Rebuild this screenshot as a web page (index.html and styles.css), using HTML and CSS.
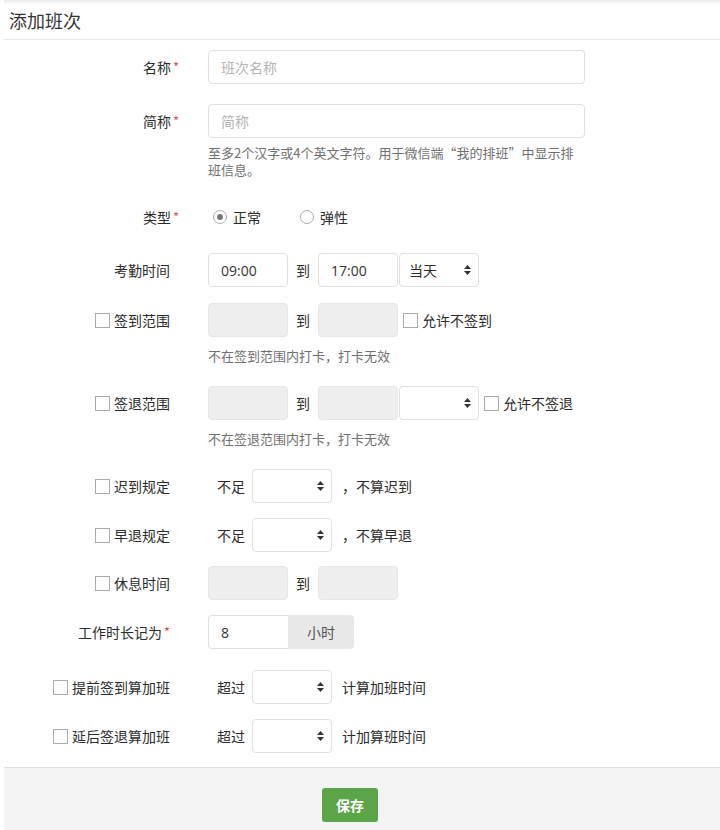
FILE: index.html
```html
<!DOCTYPE html>
<html lang="zh-CN">
<head>
<meta charset="utf-8">
<title>添加班次</title>
<link rel="stylesheet" href="styles.css">
</head>
<body>
<div class="page">
  <header class="head"><h1 class="title">添加班次</h1></header>
  <form class="form">
    <div class="group first">
      <div class="label">名称<span class="req hang">*</span></div>
      <div class="field"><div class="line"><input class="input wide" type="text" placeholder="班次名称"></div></div>
    </div>

    <div class="group mt20">
      <div class="label">简称<span class="req hang">*</span></div>
      <div class="field">
        <div class="line"><input class="input wide" type="text" placeholder="简称"></div>
        <p class="help near">至多2个汉字或4个英文字符。用于微信端“我的排班”中显示排班信息。</p>
      </div>
    </div>

    <div class="group mt22">
      <div class="label">类型<span class="req hang">*</span></div>
      <div class="field">
        <div class="line">
          <span class="radio checked"></span><span class="opt">正常</span>
          <span class="radio second"></span><span class="opt">弹性</span>
        </div>
      </div>
    </div>

    <div class="group mt19">
      <div class="label">考勤时间</div>
      <div class="field">
        <div class="line">
          <input class="input short" type="text" value="09:00">
          <span class="to">到</span>
          <input class="input short" type="text" value="17:00">
          <div class="select joined-left"><span>当天</span><svg class="caret" width="7" height="10" viewBox="0 0 7 10"><path d="M3.5 0L7 4H0Z M0 6H7L3.5 10Z" fill="#333"/></svg></div>
        </div>
      </div>
    </div>

    <div class="group mt16">
      <div class="label"><span class="check"></span>签到范围</div>
      <div class="field">
        <div class="line">
          <input class="input short" type="text" disabled>
          <span class="to">到</span>
          <input class="input short" type="text" disabled>
          <span class="check after"></span><span>允许不签到</span>
        </div>
        <p class="help far">不在签到范围内打卡，打卡无效</p>
      </div>
    </div>

    <div class="group mt22">
      <div class="label"><span class="check"></span>签退范围</div>
      <div class="field">
        <div class="line">
          <input class="input short" type="text" disabled>
          <span class="to">到</span>
          <input class="input short" type="text" disabled>
          <div class="select joined-left"><span></span><svg class="caret" width="7" height="10" viewBox="0 0 7 10"><path d="M3.5 0L7 4H0Z M0 6H7L3.5 10Z" fill="#333"/></svg></div>
          <span class="check after"></span><span>允许不签退</span>
        </div>
        <p class="help far">不在签退范围内打卡，打卡无效</p>
      </div>
    </div>

    <div class="group mt22">
      <div class="label"><span class="check"></span>迟到规定</div>
      <div class="field">
        <div class="line">
          <span class="pre">不足</span>
          <div class="select"><span></span><svg class="caret" width="7" height="10" viewBox="0 0 7 10"><path d="M3.5 0L7 4H0Z M0 6H7L3.5 10Z" fill="#333"/></svg></div>
          <span class="post comma">，不算迟到</span>
        </div>
      </div>
    </div>

    <div class="group mt15">
      <div class="label"><span class="check"></span>早退规定</div>
      <div class="field">
        <div class="line">
          <span class="pre">不足</span>
          <div class="select"><span></span><svg class="caret" width="7" height="10" viewBox="0 0 7 10"><path d="M3.5 0L7 4H0Z M0 6H7L3.5 10Z" fill="#333"/></svg></div>
          <span class="post comma">，不算早退</span>
        </div>
      </div>
    </div>

    <div class="group mt14">
      <div class="label"><span class="check"></span>休息时间</div>
      <div class="field">
        <div class="line">
          <input class="input short" type="text" disabled>
          <span class="to">到</span>
          <input class="input short" type="text" disabled>
        </div>
      </div>
    </div>

    <div class="group mt15">
      <div class="label">工作时长记为<span class="req">*</span></div>
      <div class="field">
        <div class="line">
          <div class="addon-group">
            <input class="input joined" type="text" value="8">
            <span class="addon">小时</span>
          </div>
        </div>
      </div>
    </div>

    <div class="group mt21">
      <div class="label"><span class="check"></span>提前签到算加班</div>
      <div class="field">
        <div class="line">
          <span class="pre">超过</span>
          <div class="select"><span></span><svg class="caret" width="7" height="10" viewBox="0 0 7 10"><path d="M3.5 0L7 4H0Z M0 6H7L3.5 10Z" fill="#333"/></svg></div>
          <span class="post">计算加班时间</span>
        </div>
      </div>
    </div>

    <div class="group mt15">
      <div class="label"><span class="check"></span>延后签退算加班</div>
      <div class="field">
        <div class="line">
          <span class="pre">超过</span>
          <div class="select"><span></span><svg class="caret" width="7" height="10" viewBox="0 0 7 10"><path d="M3.5 0L7 4H0Z M0 6H7L3.5 10Z" fill="#333"/></svg></div>
          <span class="post">计加算班时间</span>
        </div>
      </div>
    </div>
  </form>
  <footer class="foot"><button class="btn" type="button">保存</button></footer>
</div>
</body>
</html>
```

FILE: styles.css
```css
* { box-sizing: border-box; }
html, body { margin: 0; padding: 0; background: #fff; }
body {
  font-family: "Open Sans", "Noto Sans CJK SC", sans-serif;
  font-size: 14px;
  line-height: 20px;
  color: #333;
  overflow: hidden;
}
.page { margin-left: 4px; }
.head {
  height: 40px;
  border-bottom: 1px solid #e8e8e8;
  background: linear-gradient(to bottom, #e9e9e9 0, #fafafa 3px, #fff 5px);
  display: flex;
  align-items: center;
  padding-left: 5px;
}
.title {
  margin: 0;
  font-size: 18px;
  font-weight: normal;
  line-height: 24px;
  color: #333;
  font-family: "Noto Sans CJK SC", sans-serif;
}
.form { padding-top: 10px; }
.group { display: flex; align-items: flex-start; }
.mt14 { margin-top: 14px; }
.mt15 { margin-top: 15px; }
.mt16 { margin-top: 16px; }
.mt19 { margin-top: 19px; }
.mt20 { margin-top: 20px; }
.mt21 { margin-top: 21px; }
.mt22 { margin-top: 22px; }
.label {
  flex: none;
  width: 166px;
  height: 34px;
  margin-right: 38px;
  display: flex;
  align-items: center;
  justify-content: flex-end;
  white-space: nowrap;
  font-family: "Noto Sans CJK SC", sans-serif;
  color: #2b2b2b;
}
.req { color: #d9534f; margin-left: 2px; font-size: 13px; }
.req.hang { margin-right: -9px; }
.field { display: flex; flex-direction: column; }
.line {
  display: flex;
  align-items: center;
  height: 34px;
  white-space: nowrap;
  font-family: "Noto Sans CJK SC", sans-serif;
  color: #2b2b2b;
}
.input {
  height: 34px;
  border: 1px solid #e0e0e0;
  border-radius: 4px;
  padding: 0 12px;
  font-family: "Open Sans", "Noto Sans CJK SC", sans-serif;
  font-size: 14px;
  color: #333;
  background: #fff;
  outline: none;
}
.input::placeholder { color: #b3b3b3; font-family: "Noto Sans CJK SC", sans-serif; }
.input.wide { width: 377px; }
.input.short { width: 80px; }
.input:disabled { background: #eee; border-color: #e6e6e6; }
.to { width: 30px; text-align: center; }
.select {
  width: 80px;
  height: 34px;
  border: 1px solid #e0e0e0;
  border-radius: 4px;
  background: #fff;
  display: flex;
  align-items: center;
  justify-content: space-between;
  padding: 0 7px 0 9px;
}
.select.joined-left { margin-left: 1px; }
.caret { display: block; }
.check {
  width: 15px;
  height: 15px;
  border: 1px solid #aaa;
  background: #fff;
  margin-right: 4px;
  flex: none;
}
.check.after { margin-left: 5px; }
.radio {
  width: 14px;
  height: 14px;
  border: 1px solid #aaa;
  border-radius: 50%;
  margin-left: 5px;
  margin-right: 6px;
  display: flex;
  align-items: center;
  justify-content: center;
  flex: none;
}
.radio.checked::after {
  content: "";
  width: 6px;
  height: 6px;
  border-radius: 50%;
  background: #777;
}
.radio.second { margin-left: 39px; }
.pre { margin-left: 9px; margin-right: 7px; }
.post { margin-left: 10px; }
.post.comma { margin-left: 10px; }
.addon-group { display: flex; }
.input.joined { width: 80px; border-radius: 4px 0 0 4px; border-right: 0; }
.addon {
  width: 66px;
  height: 34px;
  background: #e8e8e8;
  border-radius: 0 4px 4px 0;
  display: flex;
  align-items: center;
  justify-content: center;
  color: #555;
}
.help {
  margin: 0;
  width: 377px;
  font-family: "Noto Sans CJK SC", sans-serif;
  font-size: 13px;
  line-height: 17px;
  color: #6f6f6f;
}
.help.near { margin-top: 6px; }
.help.far { margin-top: 10px; }
.foot {
  margin-top: 14px;
  border-top: 1px solid #e0e0e0;
  background: #f4f4f4;
  padding: 20px 0 8px 318px;
}
.btn {
  width: 56px;
  height: 34px;
  border: 0;
  border-radius: 3px;
  background: #5ba447;
  color: #fff;
  font-family: "Noto Sans CJK SC", sans-serif;
  font-size: 14px;
  font-weight: bold;
  padding: 0;
}
```
